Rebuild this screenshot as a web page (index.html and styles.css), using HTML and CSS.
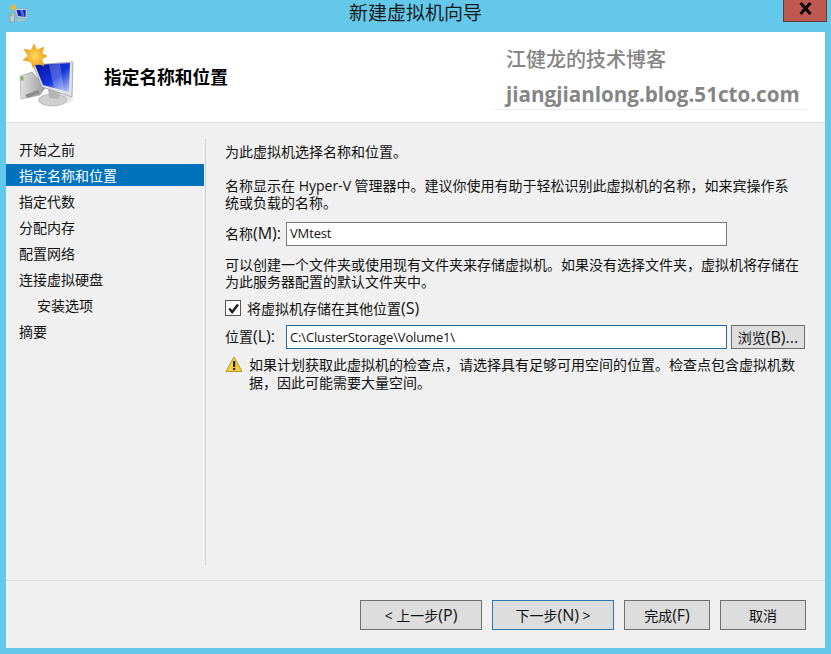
FILE: index.html
```html
<!DOCTYPE html>
<html lang="zh-CN">
<head>
<meta charset="utf-8">
<title>新建虚拟机向导</title>
<link rel="stylesheet" href="styles.css">
</head>
<body>
<div class="window">
  <div class="titlebar">
    <svg class="app-icon" width="20" height="20" viewBox="0 0 20 20">
      <rect x="1" y="10" width="4.5" height="9" fill="#c6c8ca" stroke="#8a8a8a" stroke-width=".6"/>
      <rect x="2" y="11.5" width="1.5" height="1.5" fill="#6db04a"/>
      <ellipse cx="12" cy="17" rx="4" ry="1.4" fill="#bdbdbd"/>
      <polygon points="6,6 18,6 18,15.5 8,14" fill="#d8dbe0" stroke="#9a9a9a" stroke-width=".5"/>
      <polygon points="7.5,7 16.8,7 16.6,14 9,13" fill="#1226b8"/>
      <polygon points="11,7 14,7 15.5,14 13,13.6" fill="#6f8cf0" opacity=".7"/>
      <polygon points="4,0.5 5,2.6 7.3,1.8 6.2,4 8,5.4 5.6,5.6 5.2,8 3.8,6.2 1.6,7.4 2.2,5 0.2,3.8 2.6,3.2" fill="#f5b32a"/>
    </svg>
    <div class="title">新建虚拟机向导</div>
    <button class="close" aria-label="关闭">
      <svg width="13" height="13" viewBox="0 0 13 13"><path d="M1.5 1 L11.5 12 M11.5 1 L1.5 12" stroke="#000" stroke-width="3" fill="none"/></svg>
    </button>
  </div>
  <div class="client">
    <header class="head">
      <svg class="head-icon" width="60" height="66" viewBox="0 0 60 66">
        <defs>
          <linearGradient id="scr" x1="0" y1="0" x2="1" y2="1"><stop offset="0" stop-color="#06129a"/><stop offset=".55" stop-color="#1434dc"/><stop offset="1" stop-color="#c2cffa"/></linearGradient>
          <linearGradient id="case" x1="0" y1="0" x2="1" y2="0"><stop offset="0" stop-color="#e2e2e2"/><stop offset="1" stop-color="#9a9a9a"/></linearGradient>
          <radialGradient id="star"><stop offset="0" stop-color="#ffdc60"/><stop offset="1" stop-color="#f09a12"/></radialGradient>
          <radialGradient id="shadow"><stop offset="0" stop-color="#999" stop-opacity=".6"/><stop offset="1" stop-color="#999" stop-opacity="0"/></radialGradient>
        </defs>
        <ellipse cx="46" cy="56" rx="13" ry="6" fill="url(#shadow)"/>
        <polygon points="4,33 16,29 30,44 24,52 5,56" fill="url(#case)" stroke="#8d8d8d" stroke-width=".5"/>
        <rect x="4.8" y="33.500" width="2.600" height="4" fill="#6db04a"/>
        <polygon points="9,52 22,47 24,50 12,55" fill="#8a8a8a"/>
        <ellipse cx="36.500" cy="57" rx="14" ry="6" fill="#cfcfcf" stroke="#a5a5a5" stroke-width=".6"/>
        <polygon points="32,46 44,50 43,56 33,55" fill="#b5b5b5"/>
        <polygon points="17,22 57,19 56,54 26,44" fill="#dfe1e6" stroke="#9c9ea4" stroke-width=".8"/>
        <polygon points="19,22 54,20 53,49 27,42" fill="url(#scr)"/>
        <polygon points="33,21.500 44,20.800 48,48 38,45.500" fill="#fff" opacity=".22"/>
        <polygon points="18,1 21,7 28,4 26,10.500 31,13 26,16 28,23 21,20 17,25 15,19 7,17 12,13 8,6 15,7.500" fill="url(#star)" stroke="#e8a020" stroke-width=".5"/>
      </svg>
      <h1 class="head-title">指定名称和位置</h1>
      <div class="mark">
        <div class="mark-cn">江健龙的技术博客</div>
        <div class="mark-url">jiangjianlong.blog.51cto.com</div>
      </div>
    </header>
    <main class="main">
      <nav class="steps">
        <div class="step">开始之前</div>
        <div class="step current">指定名称和位置</div>
        <div class="step">指定代数</div>
        <div class="step">分配内存</div>
        <div class="step">配置网络</div>
        <div class="step">连接虚拟硬盘</div>
        <div class="step sub">安装选项</div>
        <div class="step">摘要</div>
      </nav>
      <section class="form">
        <p class="intro">为此虚拟机选择名称和位置。</p>
        <p class="para">名称显示在 Hyper-V 管理器中。建议你使用有助于轻松识别此虚拟机的名称，如来宾操作系统或负载的名称。</p>
        <div class="row name-row">
          <label class="row-label">名称<span class="lat">(M):</span></label>
          <div class="input">VMtest</div>
        </div>
        <p class="para folder">可以创建一个文件夹或使用现有文件夹来存储虚拟机。如果没有选择文件夹，虚拟机将存储在为此服务器配置的默认文件夹中。</p>
        <div class="check-row">
          <span class="check"><svg width="13" height="13" viewBox="0 0 13 13"><path d="M2.2 6.5 L5.2 10 L11 2.500" stroke="#222" stroke-width="2.4" fill="none"/></svg></span>
          <span>将虚拟机存储在其他位置<span class="lat">(S)</span></span>
        </div>
        <div class="row loc-row">
          <label class="row-label">位置<span class="lat">(L):</span></label>
          <div class="input focus">C:\ClusterStorage\Volume1\</div>
          <button class="btn browse">浏览<span class="lat">(B)...</span></button>
        </div>
        <div class="warn">
          <svg class="warn-icon" width="18" height="17" viewBox="0 0 18 17"><polygon points="9,1 17,15.500 1,15.500" fill="#f7d038" stroke="#b59a2a" stroke-width="1" stroke-linejoin="round"/><rect x="8" y="5" width="2.200" height="6" fill="#222"/><rect x="8" y="12" width="2.200" height="2" fill="#222"/></svg>
          <p>如果计划获取此虚拟机的检查点，请选择具有足够可用空间的位置。检查点包含虚拟机数据，因此可能需要大量空间。</p>
        </div>
      </section>
    </main>
    <footer class="foot">
      <button class="btn wide">&lt; 上一步<span class="lat">(P)</span></button>
      <button class="btn wide default">下一步<span class="lat">(N)</span> &gt;</button>
      <button class="btn">完成<span class="lat">(F)</span></button>
      <button class="btn">取消</button>
    </footer>
  </div>
</div>
</body>
</html>
```

FILE: styles.css
```css
* { box-sizing: border-box; }
html, body { margin: 0; padding: 0; }
body {
  width: 831px;
  height: 654px;
  overflow: hidden;
  background: #64c8eb;
  font-family: "Open Sans", "Noto Sans CJK SC", sans-serif;
  font-size: 14px;
  color: #111;
}
.lat { font-size: 16px; line-height: 1; }
.window { display: flex; flex-direction: column; height: 654px; }
.titlebar { height: 32px; flex: none; display: flex; align-items: flex-start; position: relative; }
.app-icon { position: absolute; left: 9px; top: 3px; }
.title { flex: 1; text-align: center; font-size: 19px; line-height: 26px; color: #1a1a1a; }
.close {
  position: absolute; left: 783px; top: -1px; width: 44px; height: 23px;
  padding: 0 0 5px; background: #bf5950; border: 1px solid #5c3b38;
  display: flex; align-items: center; justify-content: center;
}
.client {
  flex: 1; margin: 0 6px 6px; background: #f0f0f0;
  display: flex; flex-direction: column; min-height: 0;
}
.head {
  height: 91px; flex: none; background: #fff; border-bottom: 1px solid #dedede;
  display: flex; align-items: flex-start; position: relative;
}
.head-icon { margin: 11px 0 0 10px; flex: none; }
.head-title {
  margin: 32px 0 0 28px; font-size: 17.7px; font-weight: 700; line-height: 24px; color: #000;
  font-family: "Noto Sans CJK SC", sans-serif;
}
.mark { position: absolute; left: 487px; top: 10px; width: 314px; height: 68px; padding-left: 13px; border-bottom: 1px solid #eee; color: #858585; font-weight: 700; }
.mark-cn { font-size: 20px; line-height: 34px; font-weight: 500; font-family: "Noto Sans CJK SC", sans-serif; }
.mark-url { font-size: 20.6px; line-height: 30px; margin-top: 3px; font-family: "Open Sans", sans-serif; white-space: nowrap; }
.main { flex: 1; display: flex; min-height: 0; }
.steps {
  width: 200px; flex: none; margin: 16px 0 15px; border-right: 1px solid #cfcfcf;
  padding-right: 1px;
}
.step { display: flex; align-items: center; height: 26px; padding-left: 13px; color: #111; }
.steps .step:first-child { margin-top: -3px; }
.step.current { background: #0072bc; color: #fff; height: 22px; margin: 2px 0; }
.step.sub { padding-left: 31px; }
.form { flex: 1; padding: 20px 20px 0 19px; min-width: 0; }
.form p { margin: 0; line-height: 17px; max-width: 576px; }
.intro { height: 17px; }
.para { margin-top: 17px !important; }
.row { display: flex; align-items: center; }
.row-label { width: 61px; flex: none; line-height: 24px; }
.input {
  width: 441px; flex: none; height: 24px; background: #fff; border: 1px solid #7a7a7a;
  padding: 0 3px; line-height: 21px; font-size: 13px; letter-spacing: -.15px;
}
.input.focus { border-color: #1f6ba5; line-height: 23px; }
.name-row { margin-top: 11px; }
.para.folder { margin-top: 10px !important; }
.check-row { display: flex; align-items: center; margin-top: 8px; height: 20px; gap: 6px; }
.check { width: 16px; height: 16px; flex: none; background: #fff; border: 1px solid #555; display: flex; align-items: center; justify-content: center; }
.loc-row { margin-top: 7px; }
.warn { display: flex; margin-top: 7px; gap: 6px; align-items: flex-start; }
.warn-icon { flex: none; }
.form .warn p { line-height: 18px; width: 560px; }
.btn {
  height: 30px; background: #dddddd; border: 1px solid #707070; padding: 0;
  font: inherit; color: #111; width: 86px; flex: none;
}
.browse { width: 74px; height: 24px; margin-left: 4px; }
.wide { width: 122px; }
.default { border-color: #2b7ab5; }
.foot {
  height: 68px; flex: none; border-top: 1px solid #dfdfdf;
  display: flex; gap: 10px; padding: 19px 19px 0 0; justify-content: flex-end; align-items: flex-start;
}
```
